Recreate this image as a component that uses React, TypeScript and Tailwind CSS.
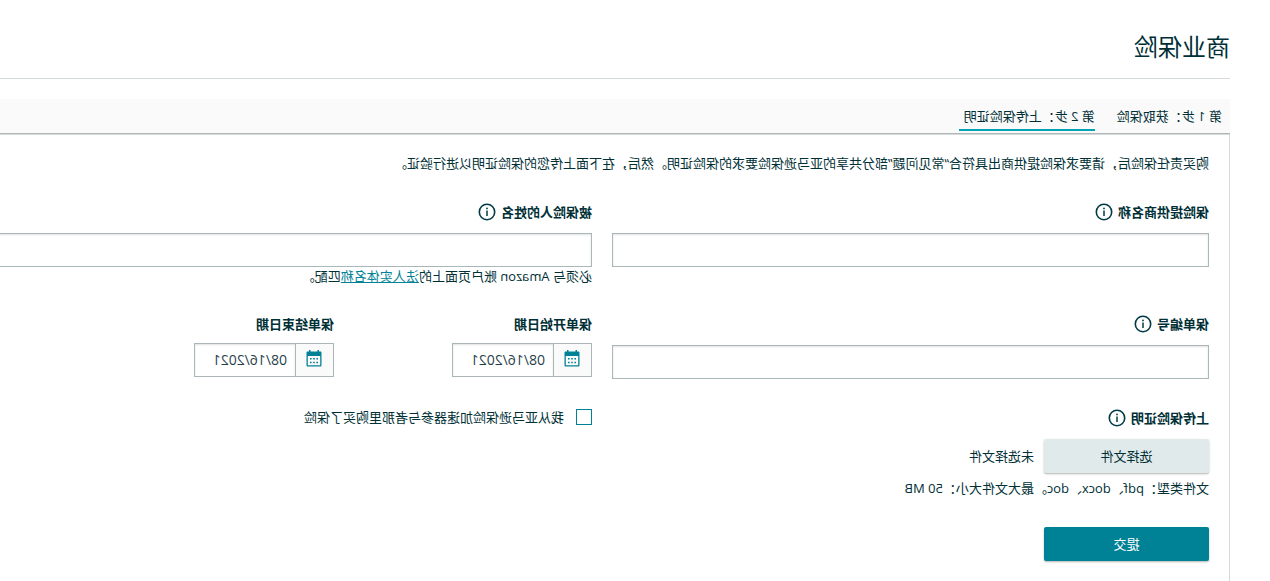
import { useRef, useState } from "react";
import type { FormEvent, ReactNode } from "react";

const steps = ["第 1 步：获取保险", "第 2 步：上传保险证明"];

const inputClass =
  "block h-[34px] w-full border border-[#aab7b8] bg-white px-2 shadow-[inset_0_1px_2px_rgba(0,0,0,0.12)] outline-none focus:border-[#008296]";

export default function App() {
  const [activeStep, setActiveStep] = useState(1);
  const [startDate, setStartDate] = useState("08/16/2021");
  const [endDate, setEndDate] = useState("08/16/2021");
  const [fileName, setFileName] = useState("");
  const fileInput = useRef<HTMLInputElement>(null);

  function handleSubmit(event: FormEvent<HTMLFormElement>) {
    event.preventDefault();
  }

  return (
    <div className="flex min-h-screen -scale-x-100 flex-col overflow-hidden bg-white pl-10 font-['Open_Sans','Noto_Sans_CJK_SC',sans-serif] text-[13px] leading-5 text-[#002f36]">
      <header className="border-b border-[#d5dbdb] pt-[31px] pb-[15px]">
        <h1 className="text-2xl leading-8">商业保险</h1>
      </header>

      <nav className="mt-5 flex h-[35px] gap-[17px] border-b border-[#b0b5b5] bg-[#fafafa] px-2">
        {steps.map((step, index) => (
          <button
            key={step}
            type="button"
            onClick={() => setActiveStep(index)}
            className={`mb-0.5 border-b-2 pt-1 pr-[5px] ${index === activeStep ? "border-[#00a4b4]" : "border-transparent"}`}
          >
            {step}
          </button>
        ))}
      </nav>

      <main className="flex-1 border-t border-l border-[#d5dbdb] pt-[18px] pb-5 pl-5">
        <p>购买责任保险后，请要求保险提供商出具符合“常见问题”部分共享的亚马逊保险要求的保险证明。然后，在下面上传您的保险证明以进行验证。</p>

        <form className="mt-[29px] -mr-[5px] grid grid-cols-2 gap-x-5" onSubmit={handleSubmit}>
          <div>
            <FieldLabel htmlFor="provider" info>保险提供商名称</FieldLabel>
            <input id="provider" type="text" className={`mt-[11px] ${inputClass}`} />
          </div>
          <div>
            <FieldLabel htmlFor="insured" info>被保险人的姓名</FieldLabel>
            <input id="insured" type="text" className={`mt-[11px] ${inputClass}`} />
            <p className="leading-[18px]">
              必须与 Amazon 账户页面上的<a href="#" className="text-[#008296] underline">法人实体名称</a>匹配。
            </p>
          </div>

          <div className="mt-[29px]">
            <FieldLabel htmlFor="policy" info>保单编号</FieldLabel>
            <input id="policy" type="text" className={`mt-[11px] ${inputClass}`} />
          </div>
          <div className="mt-[29px] flex gap-[118px]">
            <DateField id="start" label="保单开始日期" value={startDate} onChange={setStartDate} />
            <DateField id="end" label="保单结束日期" value={endDate} onChange={setEndDate} />
          </div>

          <div className="mt-[29px]">
            <FieldLabel htmlFor="proof" info>上传保险证明</FieldLabel>
            <div className="mt-[11px] flex items-center gap-2.5">
              <button
                type="button"
                onClick={() => fileInput.current?.click()}
                className="h-[34px] w-[165px] rounded-xs bg-[#e1eaeb] shadow-[0_1px_2px_rgba(0,0,0,0.3)]"
              >
                选择文件
              </button>
              <input
                ref={fileInput}
                id="proof"
                type="file"
                accept=".pdf,.doc,.docx"
                className="hidden"
                onChange={(event) => setFileName(event.target.files?.[0]?.name ?? "")}
              />
              <span>{fileName || "未选择文件"}</span>
            </div>
            <p className="mt-[5px]">文件类型：pdf、docx、doc。最大文件大小：50 MB</p>
            <button type="submit" className="mt-[29px] h-[34px] w-[165px] rounded-xs bg-[#008296] text-white shadow-[0_1px_2px_rgba(0,0,0,0.3)]">
              提交
            </button>
          </div>
          <div className="mt-[29px]">
            <label className="flex h-[18px] items-center gap-3">
              <input type="checkbox" className="size-4 appearance-none border border-[#008296] bg-white checked:bg-[#008296]" />
              我从亚马逊保险加速器参与者那里购买了保险
            </label>
          </div>
        </form>
      </main>
    </div>
  );
}

function FieldLabel({ htmlFor, info, children }: { htmlFor: string; info?: boolean; children: ReactNode }) {
  return (
    <div className="flex items-center gap-[5px]">
      <label htmlFor={htmlFor} className="font-bold">{children}</label>
      {info && <InfoIcon />}
    </div>
  );
}

function DateField({ id, label, value, onChange }: { id: string; label: string; value: string; onChange: (value: string) => void }) {
  return (
    <div className="w-[140px]">
      <FieldLabel htmlFor={id}>{label}</FieldLabel>
      <div className="mt-[9px] flex h-[34px] border border-[#aab7b8]">
        <button type="button" aria-label={label} className="flex w-[38px] shrink-0 items-start justify-center border-r border-[#aab7b8] bg-[#fafafa] pt-1.5">
          <CalendarIcon />
        </button>
        <input
          id={id}
          type="text"
          value={value}
          onChange={(event) => onChange(event.target.value)}
          className="w-full min-w-0 bg-white px-2 text-sm text-[#1f3f4a] shadow-[inset_0_1px_2px_rgba(0,0,0,0.12)] outline-none"
        />
      </div>
    </div>
  );
}

function InfoIcon() {
  return (
    <svg className="size-[18px]" viewBox="0 0 18 18" fill="none" aria-hidden="true">
      <circle cx="9" cy="9" r="7.7" stroke="#003b45" strokeWidth="1.6" />
      <path d="M9 7.6V13" stroke="#003b45" strokeWidth="1.5" />
      <circle cx="9" cy="5.4" r="0.9" fill="#003b45" />
    </svg>
  );
}

function CalendarIcon() {
  return (
    <svg className="h-[17px] w-4" viewBox="0 0 16 17" aria-hidden="true">
      <path
        fill="#008296"
        fillRule="evenodd"
        d="M3 0h1.5v1.5h7V0H13v1.5h1.2c.8 0 1.3.5 1.3 1.3v12.4c0 .8-.5 1.3-1.3 1.3H1.8c-.8 0-1.3-.5-1.3-1.3V2.8c0-.8.5-1.3 1.3-1.3H3zM1.8 6v9.2h12.4V6z"
      />
      <path fill="#008296" d="M4 8h1.6v1.5H4zM7.2 8h1.6v1.5H7.2zM10.4 8H12v1.5h-1.6zM4 11.7h1.6v1.5H4zM7.2 11.7h1.6v1.5H7.2zM10.4 11.7H12v1.5h-1.6z" />
    </svg>
  );
}
